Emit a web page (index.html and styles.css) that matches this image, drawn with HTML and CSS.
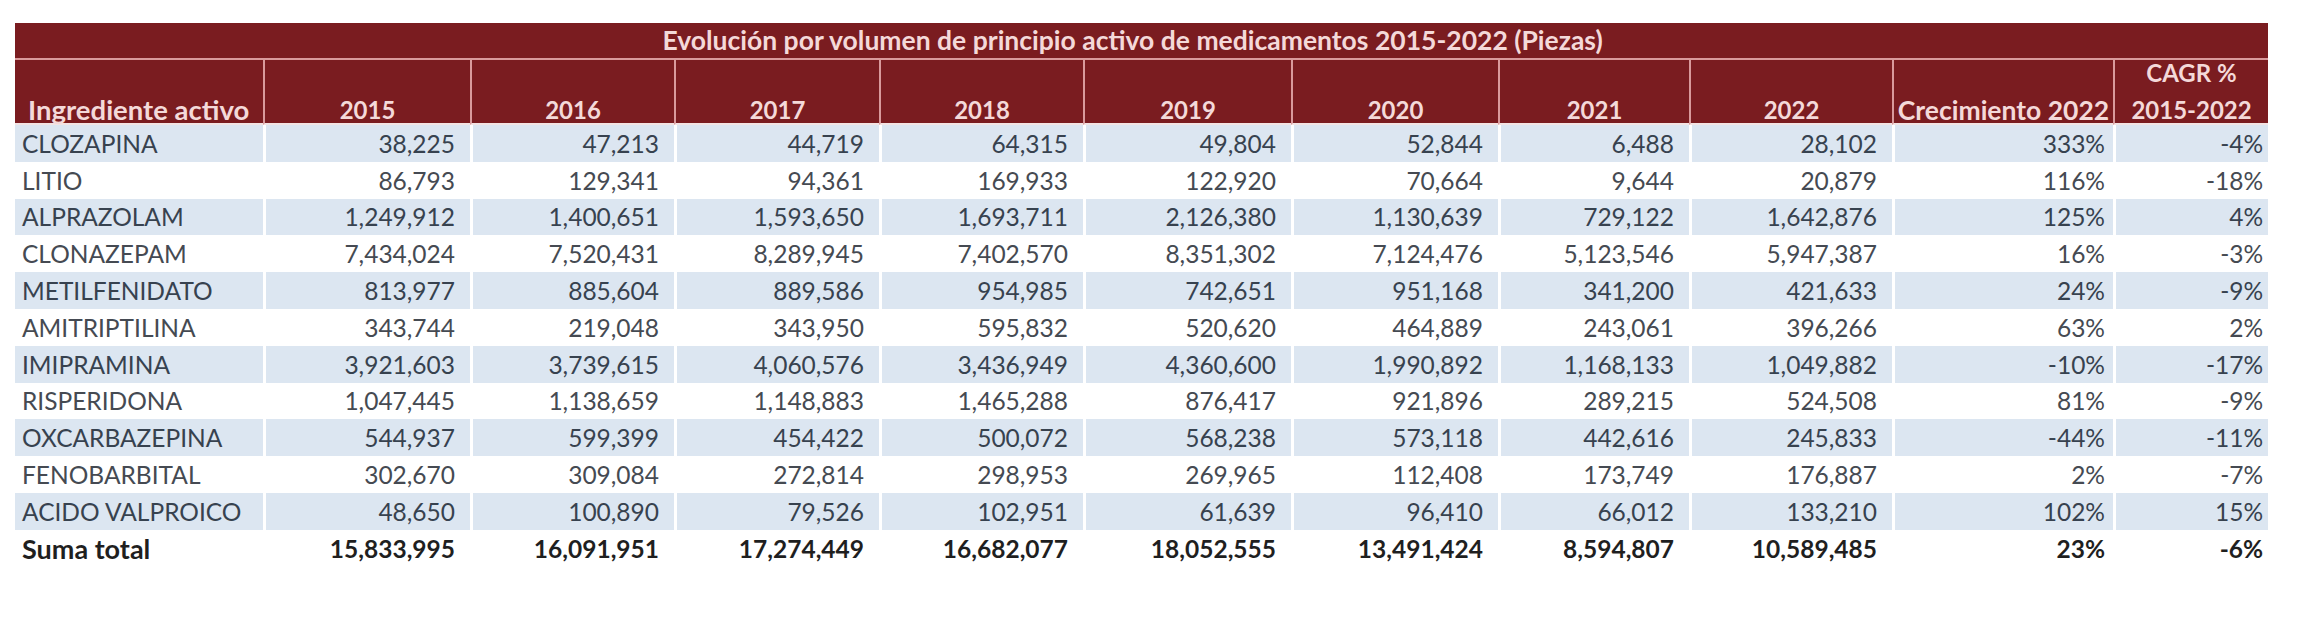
FILE: index.html
```html
<!DOCTYPE html>
<html lang="es">
<head>
<meta charset="utf-8">
<title>Evolución por volumen de principio activo de medicamentos 2015-2022</title>
<link rel="stylesheet" href="styles.css">
</head>
<body>
<div class="sheet">
<table class="grid">
  <colgroup>
    <col class="w-name"><col class="w-y1"><col class="w-y2"><col class="w-y3"><col class="w-y4"><col class="w-y5"><col class="w-y6"><col class="w-y7"><col class="w-y8"><col class="w-grow"><col class="w-cagr">
  </colgroup>
  <thead>
    <tr class="title-row">
      <th colspan="11" class="title">Evolución por volumen de principio activo de medicamentos 2015-2022 (Piezas)</th>
    </tr>
    <tr class="head-row">
      <th class="h-name">Ingrediente activo</th>
      <th>2015</th><th>2016</th><th>2017</th><th>2018</th><th>2019</th><th>2020</th><th>2021</th><th>2022</th>
      <th class="h-grow">Crecimiento 2022</th>
      <th class="h-cagr"><span class="l1">CAGR %</span><span class="l2">2015-2022</span></th>
    </tr>
  </thead>
  <tbody>
    <tr class="band"><td class="name">CLOZAPINA</td><td>38,225</td><td>47,213</td><td>44,719</td><td>64,315</td><td>49,804</td><td>52,844</td><td>6,488</td><td>28,102</td><td class="pct">333%</td><td class="pct2">-4%</td></tr>
    <tr><td class="name">LITIO</td><td>86,793</td><td>129,341</td><td>94,361</td><td>169,933</td><td>122,920</td><td>70,664</td><td>9,644</td><td>20,879</td><td class="pct">116%</td><td class="pct2">-18%</td></tr>
    <tr class="band"><td class="name">ALPRAZOLAM</td><td>1,249,912</td><td>1,400,651</td><td>1,593,650</td><td>1,693,711</td><td>2,126,380</td><td>1,130,639</td><td>729,122</td><td>1,642,876</td><td class="pct">125%</td><td class="pct2">4%</td></tr>
    <tr><td class="name">CLONAZEPAM</td><td>7,434,024</td><td>7,520,431</td><td>8,289,945</td><td>7,402,570</td><td>8,351,302</td><td>7,124,476</td><td>5,123,546</td><td>5,947,387</td><td class="pct">16%</td><td class="pct2">-3%</td></tr>
    <tr class="band"><td class="name">METILFENIDATO</td><td>813,977</td><td>885,604</td><td>889,586</td><td>954,985</td><td>742,651</td><td>951,168</td><td>341,200</td><td>421,633</td><td class="pct">24%</td><td class="pct2">-9%</td></tr>
    <tr><td class="name">AMITRIPTILINA</td><td>343,744</td><td>219,048</td><td>343,950</td><td>595,832</td><td>520,620</td><td>464,889</td><td>243,061</td><td>396,266</td><td class="pct">63%</td><td class="pct2">2%</td></tr>
    <tr class="band"><td class="name">IMIPRAMINA</td><td>3,921,603</td><td>3,739,615</td><td>4,060,576</td><td>3,436,949</td><td>4,360,600</td><td>1,990,892</td><td>1,168,133</td><td>1,049,882</td><td class="pct">-10%</td><td class="pct2">-17%</td></tr>
    <tr><td class="name">RISPERIDONA</td><td>1,047,445</td><td>1,138,659</td><td>1,148,883</td><td>1,465,288</td><td>876,417</td><td>921,896</td><td>289,215</td><td>524,508</td><td class="pct">81%</td><td class="pct2">-9%</td></tr>
    <tr class="band"><td class="name">OXCARBAZEPINA</td><td>544,937</td><td>599,399</td><td>454,422</td><td>500,072</td><td>568,238</td><td>573,118</td><td>442,616</td><td>245,833</td><td class="pct">-44%</td><td class="pct2">-11%</td></tr>
    <tr><td class="name">FENOBARBITAL</td><td>302,670</td><td>309,084</td><td>272,814</td><td>298,953</td><td>269,965</td><td>112,408</td><td>173,749</td><td>176,887</td><td class="pct">2%</td><td class="pct2">-7%</td></tr>
    <tr class="band"><td class="name">ACIDO VALPROICO</td><td>48,650</td><td>100,890</td><td>79,526</td><td>102,951</td><td>61,639</td><td>96,410</td><td>66,012</td><td>133,210</td><td class="pct">102%</td><td class="pct2">15%</td></tr>
    <tr class="total"><td class="name">Suma total</td><td>15,833,995</td><td>16,091,951</td><td>17,274,449</td><td>16,682,077</td><td>18,052,555</td><td>13,491,424</td><td>8,594,807</td><td>10,589,485</td><td class="pct">23%</td><td class="pct2">-6%</td></tr>
  </tbody>
</table>
</div>
</body>
</html>
```

FILE: styles.css
```css
html, body {
  margin: 0;
  padding: 0;
  background: #ffffff;
}

.sheet {
  padding: 23px 0 0 15px;
}

.grid {
  border-collapse: separate;
  border-spacing: 0;
  table-layout: fixed;
  width: 2253px;
  font-family: Lato, "Open Sans", "Liberation Sans", sans-serif;
  font-size: 24.5px;
  color: #454a52;
}

.w-name { width: 248px; }
.w-y1 { width: 207px; }
.w-y2 { width: 204px; }
.w-y3 { width: 205px; }
.w-y4 { width: 204px; }
.w-y5 { width: 208px; }
.w-y6 { width: 207px; }
.w-y7 { width: 191px; }
.w-y8 { width: 203px; }
.w-grow { width: 221px; }
.w-cagr { width: 155px; }

.grid th,
.grid td {
  box-sizing: border-box;
  padding: 0;
  white-space: nowrap;
}

.title-row .title {
  height: 37px;
  padding-right: 18px;
  background: #7a1c20;
  color: #f4d9d9;
  font-size: 26.5px;
  font-weight: 700;
  text-align: center;
  vertical-align: middle;
  border-bottom: 2px solid #d99a9c;
  line-height: 35px;
}

.head-row th {
  height: 65px;
  background: #7a1c20;
  color: #f4d9d9;
  font-size: 24px;
  font-weight: 700;
  text-align: center;
  vertical-align: bottom;
  line-height: 26px;
  padding-bottom: 0;
  border-left: 2px solid #d99a9c;
  border-bottom: 2px solid #f3e4e4;
}

.head-row .h-name {
  border-left: 0;
  text-align: left;
  padding-left: 13px;
  font-size: 27.5px;
}

.head-row .h-grow {
  padding: 0 2px;
  font-size: 26.5px;
}

.head-row .h-cagr .l1,
.head-row .h-cagr .l2 {
  display: block;
}

.head-row .h-cagr .l1 {
  margin-bottom: 11px;
}

.grid tbody td {
  height: 36.8px;
  text-align: right;
  vertical-align: middle;
  padding-right: 15px;
  border-left: 3px solid #ffffff;
}

.grid tbody td.name {
  text-align: left;
  padding-left: 7px;
  padding-right: 0;
  border-left: 0;
}

.grid tbody td.pct {
  padding-right: 8px;
}

.grid tbody td.pct2 {
  padding-right: 5px;
}

.grid tbody tr.band td {
  background: #dce6f1;
  color: #37424f;
}

.grid tbody tr.total td {
  font-weight: 700;
  color: #1f1f1f;
}

.grid tbody tr.total td.name {
  font-size: 27px;
}
```
